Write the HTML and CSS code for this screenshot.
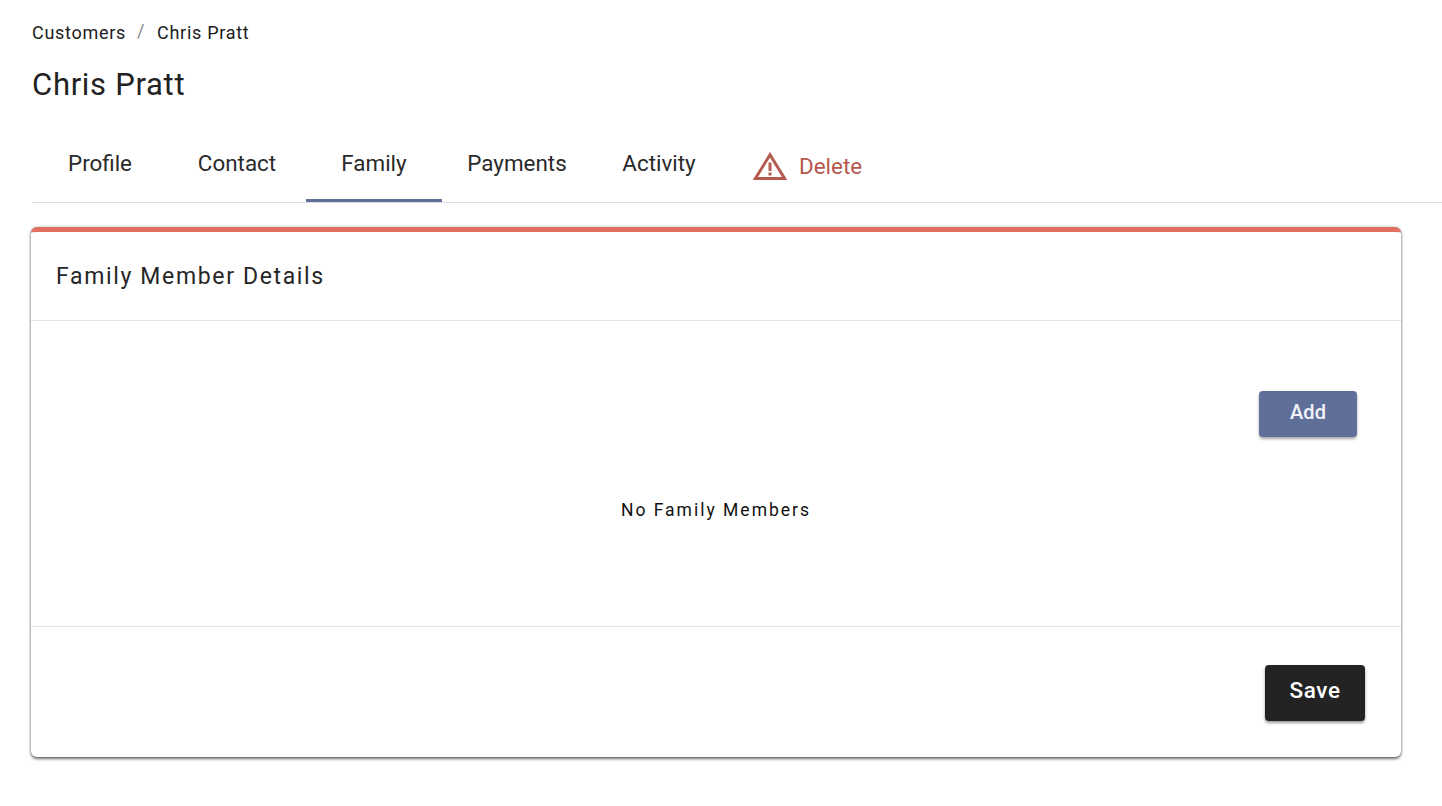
FILE: index.html
```html
<!DOCTYPE html>
<html lang="en">
<head>
<meta charset="utf-8">
<title>Chris Pratt</title>
<link rel="stylesheet" href="styles.css">
</head>
<body>
<main class="page">
  <nav class="crumbs"><span>Customers</span><span class="sep">/</span><span>Chris Pratt</span></nav>
  <h1 class="title">Chris Pratt</h1>
  <div class="tabs">
    <a class="tab tab-profile">Profile</a>
    <a class="tab tab-contact">Contact</a>
    <a class="tab tab-family active">Family</a>
    <a class="tab tab-payments">Payments</a>
    <a class="tab tab-activity">Activity</a>
    <a class="tab-delete">
      <svg class="warn" viewBox="0 0 34 28" aria-hidden="true">
        <path d="M17 2.8 L31.6 26.4 H2.4 Z" fill="none" stroke="#b55a4e" stroke-width="3"/>
        <path d="M17 10.5 V19" stroke="#b55a4e" stroke-width="3"/>
        <path d="M17 20.5 V23.5" stroke="#b55a4e" stroke-width="3"/>
      </svg>
      <span>Delete</span>
    </a>
  </div>
  <section class="card">
    <header class="card-head">Family Member Details</header>
    <div class="card-body">
      <div class="add-row"><button class="btn btn-add">Add</button></div>
      <p class="empty">No Family Members</p>
    </div>
    <footer class="card-foot"><button class="btn btn-save">Save</button></footer>
  </section>
</main>
</body>
</html>
```
FILE: styles.css
```css
* { box-sizing: border-box; }
html, body { margin: 0; padding: 0; background: #fff; height: 100%; overflow: hidden; }
body { font-family: Roboto, "Liberation Sans", Arial, sans-serif; color: #212121; }
.page { padding: 21px 0 0 31px; }
.crumbs { display: flex; align-items: center; height: 23px; font-size: 18px; letter-spacing: 0.7px; color: #1c1c1c; padding-left: 1px; }
.sep { margin: 0 12px 4px 11px; color: #888; }
.title { margin: 21px 0 0; height: 40px; line-height: 40px; font-size: 31px; font-weight: 400; letter-spacing: 0.7px; padding-left: 1px; color: #222; }
.tabs { display: flex; align-items: flex-start; height: 70px; margin-top: 28px; margin-left: 1px; border-bottom: 1px solid #dedede; }
.tab { display: flex; align-items: center; justify-content: center; height: 69px; padding-bottom: 9px; font-size: 22.4px; color: #2a2a2a; }
.tab-profile { width: 136px; }
.tab-contact { width: 138px; }
.tab-family { width: 136px; }
.tab-payments { width: 150px; }
.tab-activity { width: 134px; }
.active { border-bottom: 3px solid #5f6f9a; padding-bottom: 6px; }
.tab-delete { display: flex; align-items: center; gap: 12px; height: 69px; margin-left: 27px; padding-bottom: 3px; font-size: 22.4px; color: #b5594d; }
.warn { display: block; width: 34px; height: 28px; }
.card { width: 1370px; height: 530px; margin-top: 24px; display: flex; flex-direction: column; background: #fff; border-top: 5px solid #e0705f; border-radius: 6px; box-shadow: 0 2px 3px rgba(0,0,0,.55), 0 0 3px rgba(0,0,0,.25); }
.card-head { height: 89px; display: flex; align-items: center; padding: 1px 0 0 25px; font-size: 23px; letter-spacing: 1.65px; border-bottom: 1px solid #e2e2e2; color: #262626; }
.card-body { height: 306px; border-bottom: 1px solid #e2e2e2; padding: 70px 44px 0 0; }
.add-row { display: flex; justify-content: flex-end; }
.btn { border: 0; font-family: inherit; font-weight: 500; color: #fff; border-radius: 4px; display: block; }
.btn-add { width: 98px; height: 46px; background: #5f6f9a; font-size: 20px; color: #f2f4fa; box-shadow: 0 2px 3px rgba(0,0,0,.35); padding-bottom: 5px; }
.empty { margin: 63px 0 0 44px; text-align: center; font-size: 17.5px; font-weight: 400; letter-spacing: 2px; color: #111; }
.card-foot { flex: 1; display: flex; justify-content: flex-end; padding: 38px 36px 0 0; }
.btn-save { width: 100px; height: 56px; background: #232323; font-size: 22.5px; letter-spacing: 0.6px; box-shadow: 0 2px 3px rgba(0,0,0,.4); padding-bottom: 7px; }
```
